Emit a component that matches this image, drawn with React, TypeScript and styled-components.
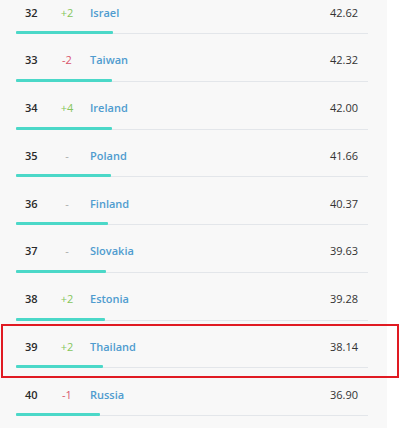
import React from 'react';
import styled, { createGlobalStyle } from 'styled-components';

const GlobalStyle = createGlobalStyle`
  html, body {
    margin: 0;
    padding: 0;
    background: #ffffff;
  }
  body {
    font-family: 'Open Sans', 'Liberation Sans', sans-serif;
    overflow: hidden;
  }
`;

const Panel = styled.div`
  display: flow-root;
  width: 387px;
  height: 428px;
  background: #f8f8f8;
  padding-left: 16px;
  box-sizing: border-box;
`;

const List = styled.div`
  width: 352px;
  margin-top: -13.75px;
`;

const Row = styled.div`
  position: relative;
  height: 47.75px;
  display: flex;
  flex-direction: column;
`;

const Cells = styled.div`
  flex: 1;
  display: grid;
  grid-template-columns: 33px 18px 1fr auto;
  align-items: center;
  padding: 7px 10px 0 9px;
  font-size: 11px;
`;

const Rank = styled.span`
  font-weight: 600;
  color: #2a2a2a;
`;

const Change = styled.span<{ $dir: 'up' | 'down' | 'same' }>`
  text-align: center;
  font-weight: 500;
  color: ${p => (p.$dir === 'up' ? '#86c65c' : p.$dir === 'down' ? '#d8546c' : '#a9a9a9')};
`;

const Country = styled.span`
  margin-left: 14px;
  font-weight: 600;
  color: #4f9ccf;
`;

const Score = styled.span`
  font-weight: 500;
  color: #333333;
`;

const Track = styled.div`
  height: 3px;
  background: linear-gradient(#e3e6ea, #e3e6ea) bottom / 100% 1px no-repeat;
`;

const Fill = styled.div`
  height: 3px;
  background: #4bd8c8;
  border-radius: 1px;
`;

const Highlight = styled.div`
  position: absolute;
  top: 3px;
  bottom: -10px;
  left: -15px;
  right: -31px;
  border: 2.5px solid #e01a22;
  pointer-events: none;
`;

type Entry = { rank: number; change: string; country: string; score: string; mark?: boolean };

const rows: Entry[] = [
  { rank: 32, change: '+2', country: 'Israel', score: '42.62' },
  { rank: 33, change: '-2', country: 'Taiwan', score: '42.32' },
  { rank: 34, change: '+4', country: 'Ireland', score: '42.00' },
  { rank: 35, change: '-', country: 'Poland', score: '41.66' },
  { rank: 36, change: '-', country: 'Finland', score: '40.37' },
  { rank: 37, change: '-', country: 'Slovakia', score: '39.63' },
  { rank: 38, change: '+2', country: 'Estonia', score: '39.28' },
  { rank: 39, change: '+2', country: 'Thailand', score: '38.14', mark: true },
  { rank: 40, change: '-1', country: 'Russia', score: '36.90' },
];

const dirOf = (c: string): 'up' | 'down' | 'same' =>
  c.startsWith('+') ? 'up' : c === '-' ? 'same' : 'down';

export default function App() {
  return (
    <>
      <GlobalStyle />
      <Panel>
        <List>
          {rows.map(r => (
            <Row key={r.rank}>
              <Cells>
                <Rank>{r.rank}</Rank>
                <Change $dir={dirOf(r.change)}>{r.change}</Change>
                <Country>{r.country}</Country>
                <Score>{r.score}</Score>
              </Cells>
              <Track>
                <Fill style={{ width: `${parseFloat(r.score) * 2.276}px` }} />
              </Track>
              {r.mark && <Highlight />}
            </Row>
          ))}
        </List>
      </Panel>
    </>
  );
}
